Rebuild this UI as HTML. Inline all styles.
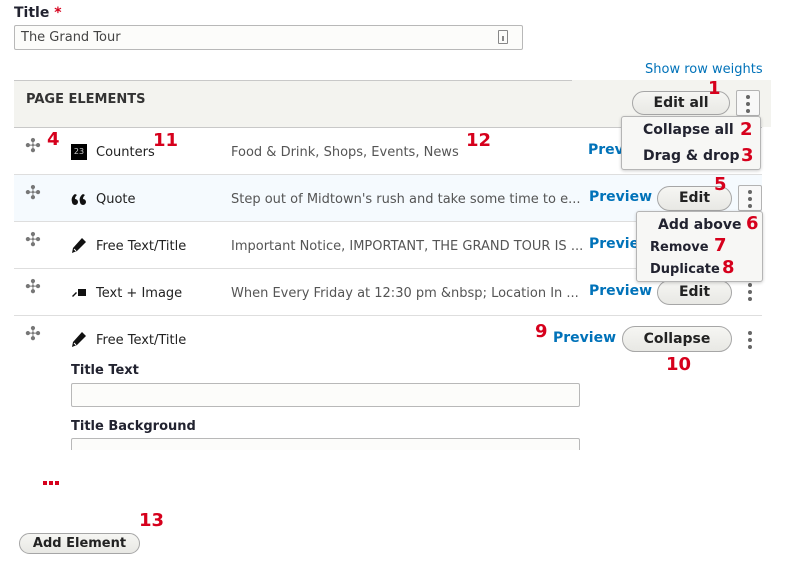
<!DOCTYPE html>
<html><head><meta charset="utf-8"><style>
*{box-sizing:border-box;margin:0;padding:0}
body{width:800px;height:571px;background:#fff;position:relative;overflow:hidden;font-family:"DejaVu Sans","Liberation Sans",sans-serif;color:#222330;font-size:13px}
.a{position:absolute;white-space:nowrap}
.b{font-weight:bold}
.r{color:#d6001c;font-weight:900;font-size:18px;position:absolute;font-family:"DejaVu Sans",sans-serif}
.btn{position:absolute;border:1px solid #a6a6a6;border-radius:14px;background:linear-gradient(#f6f6f3,#e8e8e4);font-weight:bold;font-size:14px;text-align:center;color:#222}
.keb{position:absolute;width:24px;height:26px;border:1px solid #b3b3b3;border-radius:2px;background:#f8f8f8}
.dots{position:absolute;width:4px}
.dots i{display:block;width:4px;height:4px;border-radius:2px;background:#666;margin-bottom:3px}
.menu{position:absolute;background:#f7f7f5;border:1px solid #b5b5b5;border-radius:3px;box-shadow:0 1px 3px rgba(0,0,0,.2)}
.menu div{position:absolute;font-weight:bold;font-size:14px;white-space:nowrap}
.line{position:absolute;height:1px;background:#dedede}
.prev{position:absolute;color:#0072b9;font-weight:bold;font-size:14px}
.lab{position:absolute;font-size:13px;color:#222}
.sum{position:absolute;font-size:13px;color:#555}
.mv{position:absolute;color:#777;font-size:19px;line-height:1;font-weight:bold}
.inp{position:absolute;border:1px solid #b8b8b8;border-radius:2px;background:#fcfcfa}
</style></head><body>
<div class="a b" style="left:14px;top:5px;font-size:14px">Title <span style="color:#d6001c">*</span></div>
<div class="inp" style="left:14px;top:25px;width:509px;height:25px"></div>
<div class="a" style="left:21px;top:30px;font-size:13px;color:#444">The Grand Tour</div>
<div class="a" style="left:498px;top:30px;width:10px;height:14px;border:1px solid #888;border-radius:1px"><div style="position:absolute;left:3px;top:5px;width:2px;height:5px;background:#888"></div></div>
<div class="a" style="left:645px;top:62px;color:#0072b9;font-size:13px">Show row weights</div>

<div class="a" style="left:14px;top:80px;width:757px;height:47px;background:#f3f3ef"></div>
<div class="a" style="left:14px;top:80px;width:558px;height:1px;background:#c8c8c8"></div>
<div class="a" style="left:14px;top:127px;width:748px;height:1px;background:#c8c8c8"></div>
<div class="a b" style="left:26px;top:92px;font-size:13px;color:#333">PAGE ELEMENTS</div>
<div class="btn" style="left:632px;top:91px;width:98px;height:24px;line-height:22px">Edit all</div>
<div class="keb" style="left:736px;top:90px"></div><div class="dots" style="left:746px;top:95px"><i></i><i></i><i></i></div>
<div class="r" style="left:708px;top:78px">1</div>

<div class="a" style="left:14px;top:175px;width:748px;height:46px;background:#f5fafe"></div>
<div class="line" style="left:14px;top:174px;width:748px"></div>
<div class="line" style="left:14px;top:221px;width:748px"></div>
<div class="line" style="left:14px;top:268px;width:748px"></div>
<div class="line" style="left:14px;top:315px;width:748px"></div>

<div class="mv" style="left:25px;top:137px">✣</div>
<div class="mv" style="left:25px;top:184px">✣</div>
<div class="mv" style="left:25px;top:231px">✣</div>
<div class="mv" style="left:25px;top:278px">✣</div>
<div class="mv" style="left:25px;top:325px">✣</div>

<div class="a" style="left:71px;top:144px;width:16px;height:16px;background:#000;color:#ccc;font-size:8px;line-height:16px;text-align:center">23</div>
<div class="lab" style="left:96px;top:145px">Counters</div>
<div class="sum" style="left:231px;top:145px">Food &amp; Drink, Shops, Events, News</div>
<div class="r" style="left:47px;top:129px">4</div><div class="r" style="left:153px;top:130px">11</div><div class="r" style="left:466px;top:130px">12</div>
<div class="prev" style="left:588px;top:142px">Preview</div>

<svg class="a" style="left:71px;top:193px" width="16" height="12" viewBox="0 0 16 12"><path d="M4 1C1 3 0 6 1 9a3 3 0 1 0 3-3C4 4 5 3 6 2z M12 1C9 3 8 6 9 9a3 3 0 1 0 3-3C12 4 13 3 14 2z" fill="#111"/></svg>
<div class="lab" style="left:96px;top:192px">Quote</div>
<div class="sum" style="left:231px;top:192px">Step out of Midtown's rush and take some time to e...</div>
<div class="prev" style="left:589px;top:189px">Preview</div>
<div class="btn" style="left:657px;top:186px;width:75px;height:25px;line-height:23px">Edit</div>
<div class="r" style="left:714px;top:174px">5</div>
<div class="keb" style="left:738px;top:185px"></div><div class="dots" style="left:748px;top:190px"><i></i><i></i><i></i></div>

<svg class="a" style="left:71px;top:237px" width="16" height="17" viewBox="0 0 16 17"><path d="M11 1l4 4-9 9-5 2 1-5z" fill="#111"/><path d="M3 12l2 2" stroke="#fff" stroke-width="1"/></svg>
<div class="lab" style="left:96px;top:239px">Free Text/Title</div>
<div class="sum" style="left:231px;top:239px">Important Notice, IMPORTANT, THE GRAND TOUR IS ...</div>
<div class="prev" style="left:589px;top:236px">Preview</div>

<svg class="a" style="left:71px;top:286px" width="16" height="12"><path d="M1 10l4-4 1 1-4 4z" fill="#111"/><rect x="7" y="3" width="8" height="7" fill="#111"/></svg>
<div class="lab" style="left:96px;top:286px">Text + Image</div>
<div class="sum" style="left:231px;top:286px">When Every Friday at 12:30 pm &amp;nbsp; Location In ...</div>
<div class="prev" style="left:589px;top:283px">Preview</div>
<div class="btn" style="left:657px;top:280px;width:75px;height:25px;line-height:23px">Edit</div>
<div class="dots" style="left:748px;top:283px"><i></i><i></i><i></i></div>

<svg class="a" style="left:71px;top:331px" width="16" height="17" viewBox="0 0 16 17"><path d="M11 1l4 4-9 9-5 2 1-5z" fill="#111"/><path d="M3 12l2 2" stroke="#fff" stroke-width="1"/></svg>
<div class="lab" style="left:96px;top:333px">Free Text/Title</div>
<div class="r" style="left:535px;top:321px">9</div>
<div class="prev" style="left:553px;top:330px">Preview</div>
<div class="btn" style="left:622px;top:326px;width:110px;height:26px;line-height:24px">Collapse</div>
<div class="dots" style="left:748px;top:331px"><i></i><i></i><i></i></div>
<div class="r" style="left:666px;top:354px">10</div>
<div class="a b" style="left:71px;top:363px;font-size:13px">Title Text</div>
<div class="inp" style="left:71px;top:383px;width:509px;height:24px"></div>
<div class="a b" style="left:71px;top:419px;font-size:13px">Title Background</div>
<div class="inp" style="left:71px;top:438px;width:509px;height:24px"></div>
<div class="a" style="left:0;top:450px;width:800px;height:121px;background:#fff"></div>
<div class="a" style="left:43px;top:481px;width:16px;height:4px;background:repeating-linear-gradient(90deg,#d6001c 0 4px,transparent 4px 6px)"></div>
<div class="r" style="left:139px;top:510px">13</div>
<div class="btn" style="left:19px;top:533px;width:121px;height:21px;line-height:19px;font-size:13px">Add Element</div>

<div class="menu" style="left:621px;top:116px;width:140px;height:54px">
<div style="left:21px;top:5px">Collapse all</div><div style="left:21px;top:31px">Drag &amp; drop</div></div>
<div class="r" style="left:740px;top:119px">2</div><div class="r" style="left:741px;top:145px">3</div>
<div class="menu" style="left:636px;top:211px;width:127px;height:71px">
<div style="left:21px;top:5px">Add above</div><div style="left:13px;top:28px;font-size:13px">Remove</div><div style="left:13px;top:50px;font-size:13px">Duplicate</div></div>
<div class="r" style="left:746px;top:213px">6</div><div class="r" style="left:714px;top:235px">7</div><div class="r" style="left:722px;top:257px">8</div>
</body></html>
